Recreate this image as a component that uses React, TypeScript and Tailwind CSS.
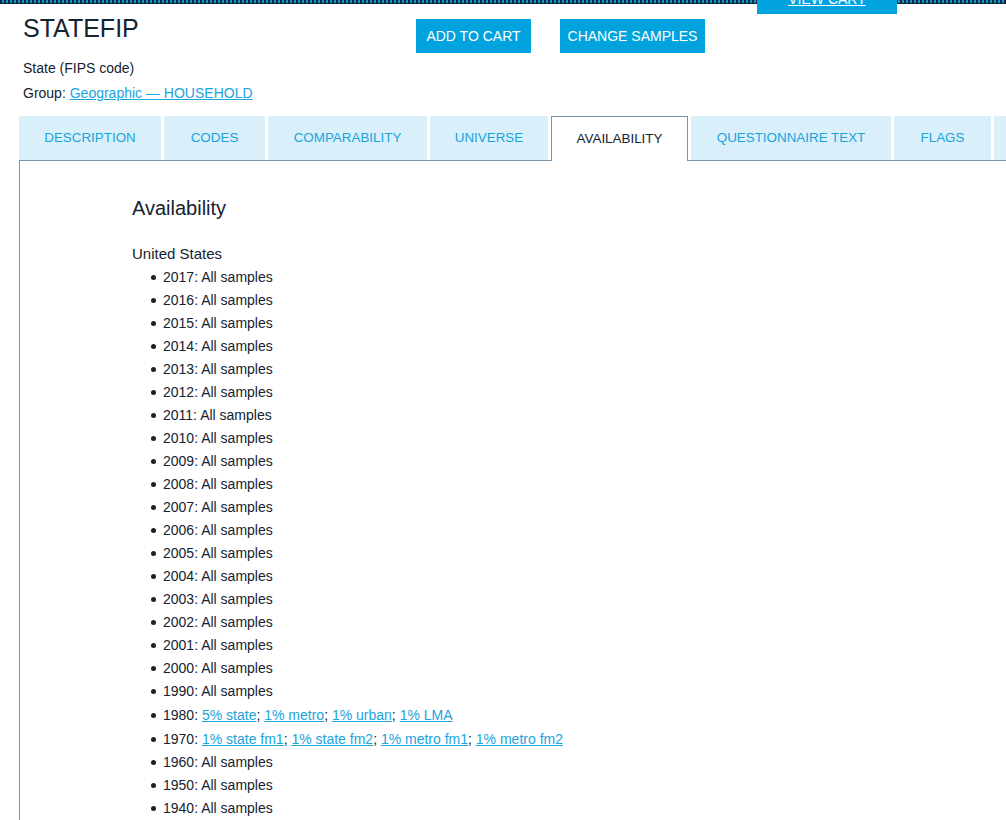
import { ReactNode } from 'react'

const tabs: { label: string; w: string }[] = [
    { label: 'DESCRIPTION', w: 'w-[142px]' },
    { label: 'CODES', w: 'w-[101px]' },
    { label: 'COMPARABILITY', w: 'w-[159px]' },
    { label: 'UNIVERSE', w: 'w-[118px]' },
    { label: 'AVAILABILITY', w: 'w-[137px]' },
    { label: 'QUESTIONNAIRE TEXT', w: 'w-[200px]' },
    { label: 'FLAGS', w: 'w-[97px]' },
    { label: 'REVISIONS', w: 'w-[120px]' },
]

const years = [
    '2017', '2016', '2015', '2014', '2013', '2012', '2011', '2010', '2009',
    '2008', '2007', '2006', '2005', '2004', '2003', '2002', '2001', '2000', '1990',
]

function SampleLinks({ items }: { items: string[] }) {
    return (
        <>
            {items.map((s, i) => (
                <span key={s}>
                    <a href="#" className="text-[#1aa3dd] underline">{s}</a>
                    {i < items.length - 1 && '; '}
                </span>
            ))}
        </>
    )
}

function Item({ year, tall, children }: { year: string; tall?: boolean; children: ReactNode }) {
    return (
        <li className={`flex items-center ${tall ? 'h-[24px]' : 'h-[23px]'}`}>
            <span className="ml-[19px] mr-[7px] h-[5px] w-[5px] shrink-0 rounded-full bg-[#15232f]" />
            <span className="whitespace-pre">{year}: {children}</span>
        </li>
    )
}

export default function App() {
    const active = 'AVAILABILITY'

    return (
        <div
            className="relative h-[820px] w-full overflow-hidden bg-white text-[#15232f]"
            style={{ fontFamily: '"Liberation Sans", Arial, sans-serif' }}
        >
            {/* top strip */}
            <div className="h-[4px] border-b border-[#0a2436] bg-[repeating-linear-gradient(90deg,#0b2b41_0px,#0b2b41_2px,#1f8fc4_2px,#1f8fc4_4px)]" />

            {/* view cart tab hanging from the top */}
            <a
                href="#"
                className="absolute left-[757px] top-0 h-[14px] w-[140px] overflow-hidden bg-[#00a3dd] text-center text-[14px] leading-[14px] text-white"
            >
                <span className="relative -top-[8px] underline">VIEW CART</span>
            </a>

            {/* header */}
            <div className="flex pl-[23px]">
                <div className="w-[393px]">
                    <h1 className="mt-[10px] text-[25px] leading-[28px]">STATEFIP</h1>
                    <p className="mt-[16px] text-[14px] leading-[20px]">State (FIPS code)</p>
                    <p className="mt-[5px] text-[14px] leading-[20px]">
                        Group:{' '}
                        <a href="#" className="text-[#1aa3dd] underline">Geographic — HOUSEHOLD</a>
                    </p>
                </div>
                <div className="mt-[15px] flex items-start gap-[29px]">
                    <button className="h-[34px] w-[115px] bg-[#00a3dd] text-[14px] text-white">ADD TO CART</button>
                    <button className="h-[34px] w-[145px] bg-[#00a3dd] text-[14px] text-white">CHANGE SAMPLES</button>
                </div>
            </div>

            {/* tabs */}
            <div className="mt-[13px] pl-[19px]">
                <div className="flex w-[1200px] gap-[3px] border-b border-[#7896ab]">
                    {tabs.map(t => (
                        <div
                            key={t.label}
                            className={
                                t.label === active
                                    ? `-mb-px flex h-[45px] shrink-0 items-center justify-center border border-b-0 border-[#7896ab] bg-white text-[13.4px] text-[#15232f] ${t.w}`
                                    : `flex h-[44px] shrink-0 items-center justify-center bg-[#d9f0fa] text-[13.4px] text-[#1aa3dd] ${t.w}`
                            }
                        >
                            {t.label}
                        </div>
                    ))}
                </div>

                {/* panel */}
                <div className="h-[700px] border-l border-[#7896ab] pl-[112px] pt-[35px]">
                    <h2 className="text-[20px] leading-[24px]">Availability</h2>
                    <p className="mt-[22px] text-[15px] leading-[23px]">United States</p>
                    <ul className="mt-px text-[14px]">
                        {years.map(y => (
                            <Item key={y} year={y}>All samples</Item>
                        ))}
                        <Item year="1980" tall>
                            <SampleLinks items={['5% state', '1% metro', '1% urban', '1% LMA']} />
                        </Item>
                        <Item year="1970" tall>
                            <SampleLinks items={['1% state fm1', '1% state fm2', '1% metro fm1', '1% metro fm2']} />
                        </Item>
                        <Item year="1960">All samples</Item>
                        <Item year="1950">All samples</Item>
                        <Item year="1940">All samples</Item>
                        <Item year="1930">All samples</Item>
                    </ul>
                </div>
            </div>
        </div>
    )
}
